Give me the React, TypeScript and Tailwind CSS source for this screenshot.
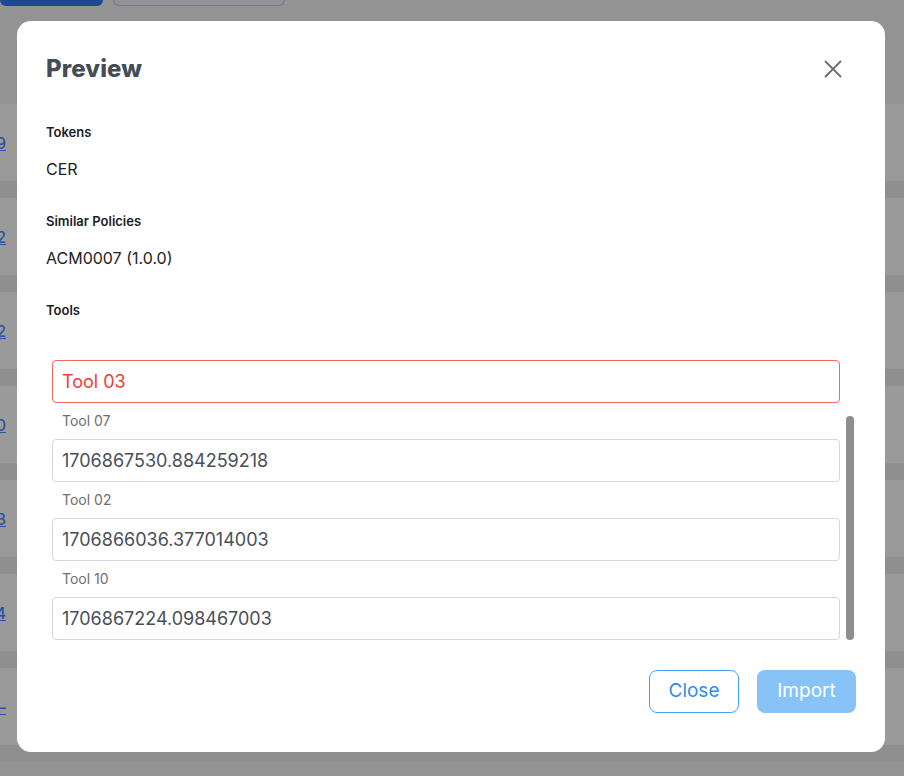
import { useState } from 'react'

interface ToolRow {
  name: string
  value: string
}

const TOOLS: ToolRow[] = [
  { name: 'Tool 07', value: '1706867530.884259218' },
  { name: 'Tool 02', value: '1706866036.377014003' },
  { name: 'Tool 10', value: '1706867224.098467003' },
]

// clipped ids of the table behind the dim overlay
const ROW_IDS = ['2029', '2032', '2042', '2050', '2063', '2074', '—']

function CloseIcon() {
  return (
    <svg width="18" height="18" viewBox="0 0 18 18" fill="none">
      <path d="M1.5 1.5L16.5 16.5M16.5 1.5L1.5 16.5" stroke="#6b7078" strokeWidth="1.8" strokeLinecap="round" />
    </svg>
  )
}

export default function App() {
  const [tools] = useState(TOOLS)

  return (
    <div className="relative h-[776px] w-[904px] overflow-hidden bg-[#939393] font-['Inter',sans-serif]">
      {/* Page behind the modal */}
      <div className="flex h-[104px] items-start gap-[10px]">
        <div className="h-[6px] w-[103px] rounded-b-[8px] bg-[#1e4796]" />
        <div className="h-[6px] w-[172px] rounded-b-[8px] border-x border-b border-[#6e7b98]" />
      </div>
      <div className="flex flex-col">
        {ROW_IDS.map((id) => (
          <div key={id}>
            <div className="flex h-[77px] items-center bg-[#9a9a9a]">
              <div className="flex w-[6px] justify-end overflow-hidden">
                <span className="whitespace-nowrap text-[16px] font-medium text-[#2b52a3] underline">{id}</span>
              </div>
            </div>
            <div className="h-[17px] bg-[#8f8f8f]" />
          </div>
        ))}
      </div>

      {/* Modal */}
      <div className="absolute left-[17px] top-[21px] flex h-[731px] w-[868px] flex-col rounded-[14px] bg-white px-[29px] pt-[28px]">
        <div className="flex h-[40px] items-center justify-between">
          <h2 className="text-[24px] font-extrabold tracking-[0.1px] text-[#454c55]">Preview</h2>
          <button className="mr-[11px] flex h-[24px] w-[24px] items-center justify-center">
            <CloseIcon />
          </button>
        </div>

        <div className="mt-[33px] flex flex-col">
          <div className="h-[20px] text-[13px] font-semibold leading-[20px] text-[#1d1d1d]">Tokens</div>
          <div className="mt-[15px] h-[24px] text-[16px] leading-[24px] text-[#222]">CER</div>

          <div className="mt-[30px] h-[20px] text-[13px] font-semibold leading-[20px] text-[#1d1d1d]">Similar Policies</div>
          <div className="mt-[15px] h-[24px] text-[16px] leading-[24px] text-[#222]">ACM0007 (1.0.0)</div>

          <div className="mt-[30px] h-[20px] text-[13px] font-semibold leading-[20px] text-[#1d1d1d]">Tools</div>
        </div>

        <div className="ml-[6px] mt-[40px] flex w-[802px] flex-col">
          <div className="flex h-[43px] w-[788px] items-center rounded-[4px] border border-[#f26a60] px-[9px] text-[18px] text-[#ef3f33]">
            Tool 03
          </div>
          <div className="flex gap-[6px]">
            <div className="flex w-[788px] flex-col pt-[9px]">
              {tools.map((t, i) => (
                <div key={t.name} className={i < tools.length - 1 ? 'mb-[9px]' : ''}>
                  <div className="h-[18px] pl-[10px] text-[14px] leading-[18px] text-[#6b6f76]">{t.name}</div>
                  <div className="mt-[9px] flex h-[43px] items-center rounded-[4px] border border-[#d3d7de] px-[9px] text-[18px] text-[#4a4f57]">
                    {t.value}
                  </div>
                </div>
              ))}
            </div>
            <div className="mt-[13px] h-[224px] w-[8px] rounded-full bg-[#8e8e8e]" />
          </div>
        </div>

        <div className="mt-[30px] flex justify-end gap-[18px]">
          <button className="h-[43px] w-[90px] rounded-[8px] border border-[#4aa2f5] text-[19px] text-[#2f8df0]">
            Close
          </button>
          <button className="h-[43px] w-[99px] rounded-[8px] bg-[#88c3f8] text-[19px] text-white">
            Import
          </button>
        </div>
      </div>
    </div>
  )
}
